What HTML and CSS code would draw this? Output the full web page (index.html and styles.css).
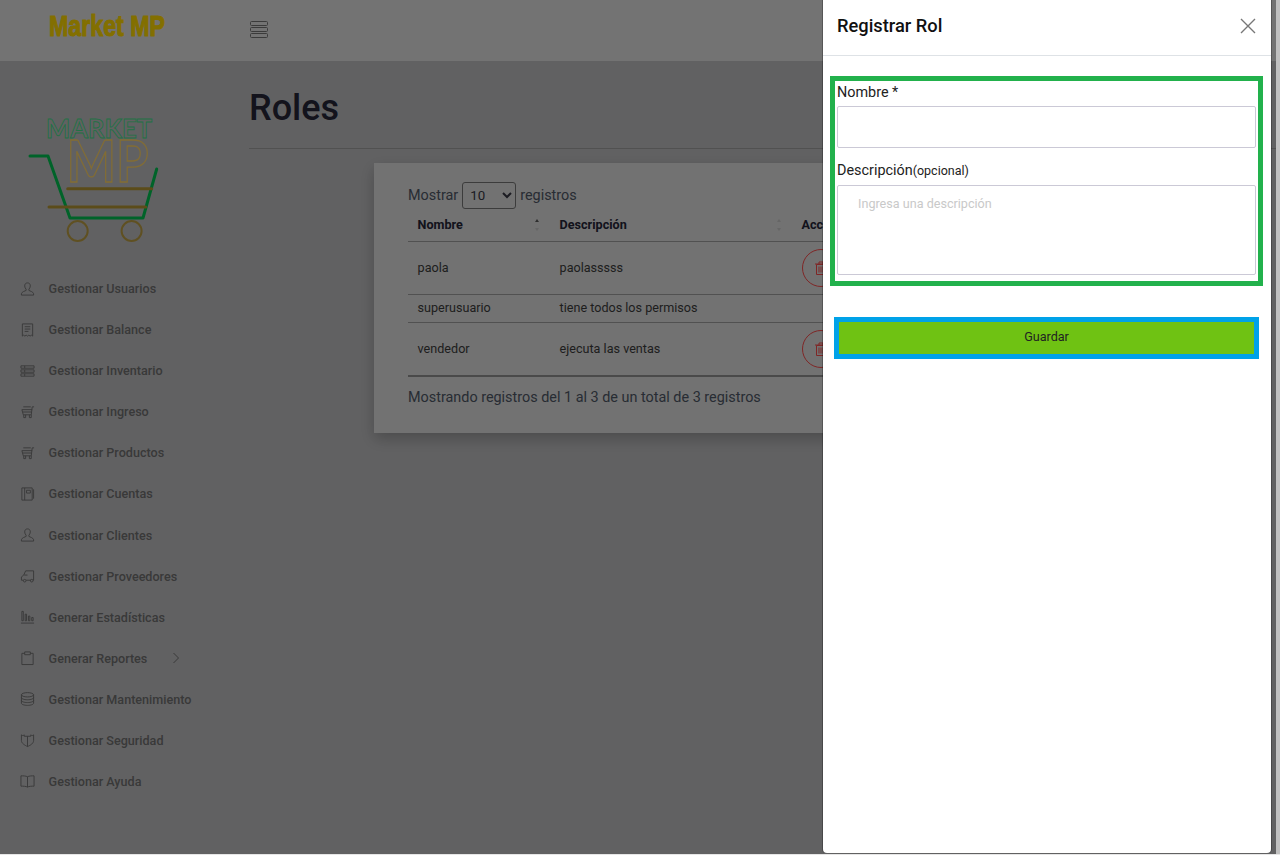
FILE: index.html
```html
<!DOCTYPE html>
<html lang="es">
<head>
<meta charset="utf-8">
<title>Roles</title>
<link rel="stylesheet" href="styles.css">
</head>
<body>
<div class="screen">
  <div class="app">
    <header class="topbar">
      <div class="brand-box"><div class="brand">Market MP</div></div>
      <svg class="burger" width="20" height="20" viewBox="0 0 20 20"><rect x="1.500" y="2.500" width="17" height="4" rx="1"/><rect x="1.500" y="8.500" width="17" height="4" rx="1"/><rect x="1.500" y="14.500" width="17" height="4" rx="1"/></svg>
    </header>
    <div class="layout">
      <aside class="sidebar">
        <svg class="logo" width="140" height="130" viewBox="0 0 140 130">
          <text class="logo-market" x="26" y="18" textLength="106" lengthAdjust="spacingAndGlyphs">MARKET</text>
          <text class="logo-mp" x="46.500" y="61.500" textLength="82" lengthAdjust="spacingAndGlyphs">MP</text>
          <polyline class="cart-green" points="10,36 28,36 50,98 123,98 136.700,49"/>
          <line class="cart-bar" x1="47.700" y1="68.700" x2="131.700" y2="68.700"/>
          <line class="cart-bar" x1="29" y1="87" x2="125.600" y2="87"/>
          <circle class="cart-wheel" cx="57.700" cy="111" r="10"/>
          <circle class="cart-wheel" cx="111.600" cy="111" r="10"/>
        </svg>
        <nav class="menu">
          <a class="item"><svg class="ic" viewBox="0 0 16 16"><path d="M8 1.500c-2 0-3 1.300-3 3.200 0 1.600.8 2.800 1.500 3.500v1.300c-1 .7-4.500 1.300-5 3.500v1.500h13V13c-.5-2.200-4-2.800-5-3.500V8.200c.7-.7 1.500-1.900 1.500-3.500 0-1.900-1-3.200-3-3.200z"/></svg><span>Gestionar Usuarios</span></a>
          <a class="item"><svg class="ic" viewBox="0 0 16 16"><path d="M2.500 1.500h11v13l-1.400-1-1.300 1-1.400-1-1.400 1-1.400-1-1.400 1-1.400-1-1.300 1zM5 4.500h6M5 7h6M5 9.500h4"/></svg><span>Gestionar Balance</span></a>
          <a class="item"><svg class="ic" viewBox="0 0 16 16"><path d="M1 2.500h14v2.500H1zM1 6.800h14v2.500H1zM1 11h14v2.500H1zM5 2.500V5M5 6.800v2.500M5 11v2.500"/></svg><span>Gestionar Inventario</span></a>
          <a class="item"><svg class="ic" viewBox="0 0 16 16"><path d="M15 2.500h-2L12 11H3.500L2 5.500h11M3.500 2.500h8M3 8h9M4 11v3h2v-3M10 11v3h2v-3"/></svg><span>Gestionar Ingreso</span></a>
          <a class="item"><svg class="ic" viewBox="0 0 16 16"><path d="M15 2.500h-2L12 11H3.500L2 5.500h11M3.500 2.500h8M3 8h9M4 11v3h2v-3M10 11v3h2v-3"/></svg><span>Gestionar Productos</span></a>
          <a class="item"><svg class="ic" viewBox="0 0 16 16"><path d="M2 1.500h11v13H2zM5 1.500v13M7 4h4v3H7zM14.500 3v10"/></svg><span>Gestionar Cuentas</span></a>
          <a class="item"><svg class="ic" viewBox="0 0 16 16"><path d="M8 1.500c-2 0-3 1.300-3 3.200 0 1.600.8 2.800 1.500 3.500v1.300c-1 .7-4.500 1.300-5 3.500v1.500h13V13c-.5-2.200-4-2.800-5-3.500V8.200c.7-.7 1.500-1.900 1.500-3.500 0-1.900-1-3.200-3-3.200z"/></svg><span>Gestionar Clientes</span></a>
          <a class="item"><svg class="ic" viewBox="0 0 16 16"><path d="M14.500 2.500H6L4 7 1.500 9v3.500h2M6.500 12.500h5M14.500 2.500v10h-.5M4.500 7H8"/><circle cx="5" cy="13" r="1.400"/><circle cx="12.500" cy="13" r="1.400"/></svg><span>Gestionar Proveedores</span></a>
          <a class="item"><svg class="ic" viewBox="0 0 16 16"><path d="M1 14.500h14M2 2v10h1.500V2zM5.500 5v7h1.500V5zM9 7v5h1.500V7zM12.500 8.500V12H14V8.500z"/></svg><span>Generar Estadísticas</span></a>
          <a class="item"><svg class="ic" viewBox="0 0 16 16"><path d="M5 3H2v12h12V3h-3M5 4.500h6V1.500H5z"/></svg><span class="item-label">Generar Reportes</span><svg class="chev" width="8" height="12" viewBox="0 0 8 12"><path d="M1.500 1l5 5-5 5"/></svg></a>
          <a class="item"><svg class="ic" viewBox="0 0 16 16"><ellipse cx="8" cy="3.500" rx="6.500" ry="2.300"/><path d="M1.500 3.500v9c0 1.300 3 2.300 6.500 2.300s6.500-1 6.500-2.300v-9M1.500 6.500c0 1.300 3 2.300 6.500 2.300s6.500-1 6.500-2.300M1.500 9.500c0 1.300 3 2.300 6.500 2.300s6.500-1 6.500-2.300"/></svg><span>Gestionar Mantenimiento</span></a>
          <a class="item"><svg class="ic" viewBox="0 0 16 16"><path d="M1.500 2.500c1 1 2 1 3 0v1.500h7V2.500c1 1 2 1 3 0v6c0 3-3 5-6.500 6.500C5 13.500 1.500 11.500 1.500 8.500zM8 4v11"/></svg><span>Gestionar Seguridad</span></a>
          <a class="item"><svg class="ic" viewBox="0 0 16 16"><path d="M8 3.500C6.500 2.500 3 2.500 1 2.500v11c2 0 5.500 0 7 1 1.500-1 5-1 7-1v-11c-2 0-5.500 0-7 1zM8 3.500v11"/></svg><span>Gestionar Ayuda</span></a>
        </nav>
      </aside>
      <main class="content">
        <h1 class="page-title">Roles</h1>
        <hr class="rule">
        <section class="card">
          <div class="length">Mostrar <select class="length-select"><option>10</option></select> registros</div>
          <table class="grid">
            <thead>
              <tr>
                <th class="col-name"><span class="th-inner">Nombre<span class="sort sort-up"></span></span></th>
                <th class="col-desc"><span class="th-inner">Descripción<span class="sort"></span></span></th>
                <th>Acciones</th>
              </tr>
            </thead>
            <tbody>
              <tr class="row-tall"><td>paola</td><td>paolasssss</td><td><span class="del"><svg width="12" height="14" viewBox="0 0 12 14"><path d="M1.500 3.500h9v10h-9zM0 3h12M4 3V1h4v2M4 5.500v6M6 5.500v6M8 5.500v6"/></svg></span></td></tr>
              <tr class="row-short"><td>superusuario</td><td>tiene todos los permisos</td><td></td></tr>
              <tr class="row-tall row-last"><td>vendedor</td><td>ejecuta las ventas</td><td><span class="del"><svg width="12" height="14" viewBox="0 0 12 14"><path d="M1.500 3.500h9v10h-9zM0 3h12M4 3V1h4v2M4 5.500v6M6 5.500v6M8 5.500v6"/></svg></span></td></tr>
            </tbody>
          </table>
          <div class="info">Mostrando registros del 1 al 3 de un total de 3 registros</div>
        </section>
      </main>
    </div>
    <div class="backdrop"></div>
    <aside class="drawer">
      <div class="drawer-head">
        <h2 class="drawer-title">Registrar Rol</h2>
        <svg class="close" width="16" height="16" viewBox="0 0 16 16"><path d="M1 1l14 14M15 1L1 15"/></svg>
      </div>
      <form class="drawer-body">
        <div class="mark-green">
          <label class="lbl lbl-first">Nombre *</label>
          <input class="field" type="text">
          <label class="lbl lbl-second">Descripción<small class="opt">(opcional)</small></label>
          <textarea class="field area" placeholder="Ingresa una descripción"></textarea>
        </div>
        <div class="mark-blue"><button class="save" type="button">Guardar</button></div>
      </form>
    </aside>
  </div>
  <div class="scroll"></div>
</div>
</body>
</html>
```
FILE: styles.css
```css
* { box-sizing: border-box; }
html, body { margin: 0; height: 855px; overflow: hidden; background: #e6e6e6; }
body { font-family: Roboto, "Liberation Sans", sans-serif; }

.screen { display: flex; height: 854px; }
.app { position: relative; width: 1276px; height: 854px; overflow: hidden; background: #b4b4b6; display: flex; flex-direction: column; }
.scroll { width: 4px; background: #c0c0c0; }

.topbar { height: 61px; flex: none; background: #d5d5d5; display: flex; align-items: center; padding-left: 49px; }
.brand-box { width: 200px; margin-top: -9px; }
.brand { width: 144px; white-space: nowrap; font-family: "Liberation Sans", sans-serif; font-weight: 700; font-size: 29px; color: #f2cd00; -webkit-text-stroke: 1.100px #f2cd00; transform: scaleX(.8); transform-origin: left center; }
.burger { fill: none; stroke: #6e6e6e; stroke-width: 1; margin-top: -3px; }

.layout { display: flex; flex: 1; }
.sidebar { width: 225px; flex: none; padding: 59px 0 0 20px; }
.logo { display: block; width: 140px; height: 130px; overflow: visible; }
.logo-market { font-family: Lato, sans-serif; font-weight: 700; font-size: 27px; fill: none; stroke: #3fd080; stroke-width: .9; }
.logo-mp { font-family: Lato, sans-serif; font-weight: 700; font-size: 58px; fill: none; stroke: #f0c860; stroke-width: 1.300; }
.cart-green { fill: none; stroke: #00b84c; stroke-width: 3; stroke-linecap: round; stroke-linejoin: round; }
.cart-bar { stroke: #a98d30; stroke-width: 3; stroke-linecap: round; }
.cart-wheel { fill: none; stroke: #b09540; stroke-width: 2; }

.menu { margin: 18px 0 0; display: flex; flex-direction: column; }
.item { height: 41.080px; display: flex; align-items: center; font-size: 12.600px; font-weight: 500; color: #6a6a6a; }
.ic { width: 15px; height: 16px; flex: none; margin-right: 13.600px; fill: none; stroke: #6a6a6a; stroke-width: 1; }
.item-label { width: 123px; }
.chev { fill: none; stroke: #6a6a6a; stroke-width: 1; }

.content { flex: 1; padding: 25px 0 0 24px; min-width: 0; color: #343440; }
.page-title { margin: 0; font-size: 36px; line-height: 44px; font-weight: 500; color: #232334; }
.rule { margin: 18px 0 0; border: 0; border-top: 1px solid #969696; }
.card { margin: 14px 0 0 125px; width: 780px; height: 270px; padding: 18px 34px 0; background: #d2d2d2; box-shadow: 0 6px 14px rgba(0,0,0,.22); }
.length { font-size: 14.400px; height: 28px; color: #4a5260; display: flex; align-items: center; gap: 4px; }
.length-select { width: 54px; height: 27px; font: 13.300px Roboto, sans-serif; color: #343440; background: #d2d2d2; border: 1px solid #707070; border-radius: 3px; padding-left: 3px; }

.grid { width: 712px; table-layout: fixed; border-collapse: collapse; font-size: 12.600px; color: #393939; }
.grid th { text-align: left; font-weight: 700; height: 32px; padding: 0 9.600px; border-bottom: 1px solid #969696; color: #232334; }
.grid td { padding: 0 9.600px; height: 28px; border-bottom: 1px solid #969696; }
.grid .row-short td { padding-bottom: 2px; }
.row-tall td { height: 53px; }
.grid .row-last td { height: 54px; border-bottom: 2px solid #8a8a8a; }
.col-name { width: 142px; }
.col-desc { width: 242px; }
.th-inner { display: flex; justify-content: space-between; align-items: center; }
.sort { width: 4px; height: 12px; position: relative; margin-right: 1px; }
.sort::before, .sort::after { content: ""; position: absolute; left: 0; border-left: 2px solid transparent; border-right: 2px solid transparent; }
.sort::before { top: 0; border-bottom: 3px solid #bcbcbc; }
.sort::after { bottom: 0; border-top: 3px solid #bcbcbc; }
.sort-up::before { border-bottom-color: #555; }
.del { width: 38px; height: 38px; border: 1px solid #eb4747; border-radius: 50%; display: flex; align-items: center; justify-content: center; }
.del svg { fill: none; stroke: #eb4747; stroke-width: 1; }
.info { margin-top: 12px; font-size: 14.400px; color: #4a5260; }

.backdrop { position: absolute; inset: 0; background: rgba(0,0,0,.46); }
.drawer { position: absolute; top: 0; right: 5px; width: 448px; height: 853px; background: #fff; border-radius: 0 0 4px 4px; box-shadow: -1px 0 0 rgba(0,0,0,.25), 1px 0 0 rgba(0,0,0,.25); color: #212121; }
.drawer-head { height: 56px; border-bottom: 1px solid #dee2e6; padding: 0 15px 0 14px; display: flex; align-items: center; justify-content: space-between; }
.drawer-title { margin: -5px 0 0; font-size: 18.300px; font-weight: 500; color: #111; }
.close { fill: none; stroke: #777; stroke-width: 1.400; margin: -3px 0 0; }
.drawer-body { padding: 20px 8px 0 7px; }
.mark-green { height: 210px; border: 5px solid #22b14c; padding: 1px 2px 0; }
.lbl { display: block; font-size: 14.400px; line-height: 21px; color: #222; margin-bottom: 4px; }
.lbl-first { margin-bottom: 3px; }
.lbl-second { margin-top: 12px; }
.opt { font-size: 12.500px; }
.field { display: block; width: 419px; height: 42px; border: 1px solid #cbc9d6; border-radius: 2px; background: #fff; margin: 0; padding: 0; outline: 0; }
.area { height: 90px; padding: 10px 20px; font: 12.600px Roboto, sans-serif; resize: none; }
.area::placeholder { color: #c9c9c9; opacity: 1; }
.mark-blue { margin: 31px 4px 0; height: 42px; border: 5px solid #00a2e8; }
.save { display: block; width: 100%; height: 100%; border: 0; background: #6fc213; color: #222; font: 12.600px Roboto, sans-serif; padding: 0 0 4px; }
```
